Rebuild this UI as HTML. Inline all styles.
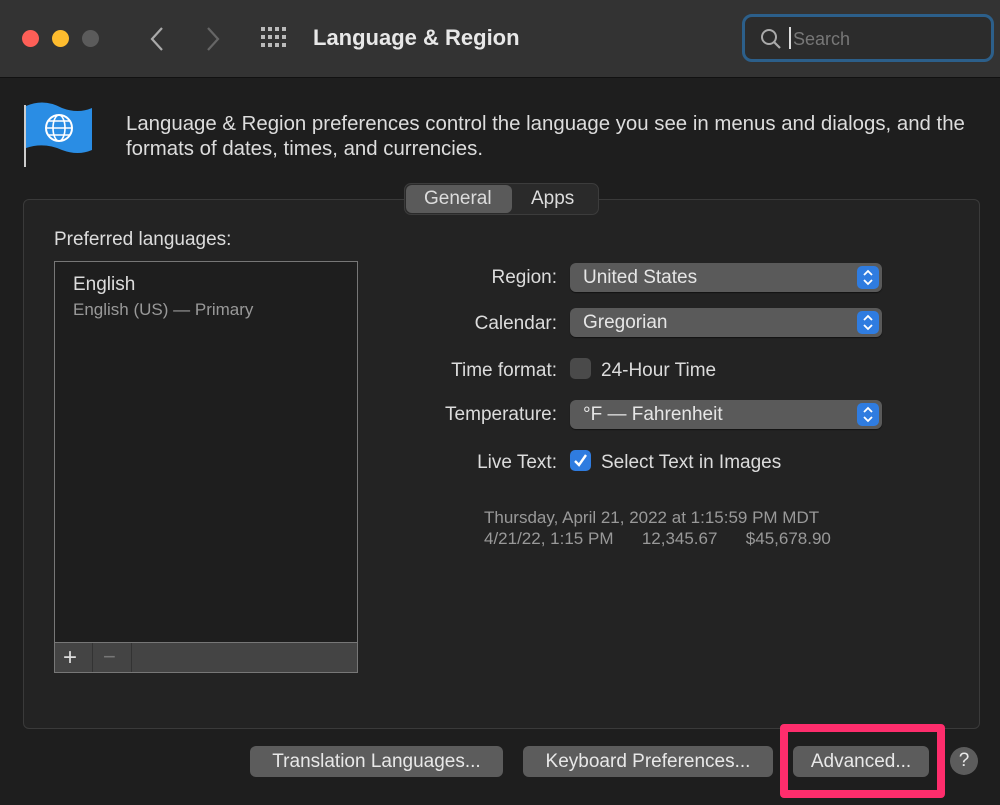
<!DOCTYPE html>
<html><head><meta charset="utf-8"><style>
*{box-sizing:border-box;margin:0;padding:0}
body{width:1000px;height:805px;background:#1e1e1e;font-family:"Liberation Sans",sans-serif;color:#dcdcdc;position:relative;overflow:hidden}
.a{position:absolute}
.tb{left:0;top:0;width:1000px;height:78px;background:#333;border-bottom:1px solid #111}
.dot{width:17px;height:17px;border-radius:50%;top:30px}
.t{font-size:19px;white-space:nowrap}
.pop{height:29px;border-radius:6px;background:#5a5a5a;left:570px;width:312px;box-shadow:0 1px 1px rgba(0,0,0,.5)}
.pop span{position:absolute;left:13px;top:4px;font-size:19px;color:#e6e6e6}
.pop i{position:absolute;right:3px;top:3px;width:22px;height:23px;border-radius:5px;background:#2f7ce0}
.pop svg{position:absolute;right:3px;top:3px}
.btn{height:31px;border-radius:6px;background:#5c5c5c;top:746px;font-size:19px;color:#e8e8e8;text-align:center;line-height:31px}
</style></head><body>
<div class="a tb"></div>
<div class="a dot" style="left:22px;background:#fe5f57"></div>
<div class="a dot" style="left:52px;background:#febc2e"></div>
<div class="a dot" style="left:82px;background:#5b5b5b"></div>
<svg class="a" style="left:145px;top:26px" width="80" height="26"><path d="M17 2 L7 13 L17 24" stroke="#aaa" stroke-width="2.2" fill="none"/><path d="M63 2 L73 13 L63 24" stroke="#666" stroke-width="2.2" fill="none"/></svg>
<svg class="a" style="left:261px;top:27px" width="30" height="22"><g fill="#bbb">
<rect x="0" y="0" width="4" height="4"/><rect x="7" y="0" width="4" height="4"/><rect x="14" y="0" width="4" height="4"/><rect x="21" y="0" width="4" height="4"/>
<rect x="0" y="8" width="4" height="4"/><rect x="7" y="8" width="4" height="4"/><rect x="14" y="8" width="4" height="4"/><rect x="21" y="8" width="4" height="4"/>
<rect x="0" y="16" width="4" height="4"/><rect x="7" y="16" width="4" height="4"/><rect x="14" y="16" width="4" height="4"/><rect x="21" y="16" width="4" height="4"/></g></svg>
<div class="a t" style="left:313px;top:25px;font-size:22px;font-weight:bold;color:#e8e8e8">Language &amp; Region</div>
<div class="a" style="left:742px;top:14px;width:252px;height:48px;border:3px solid #2c5f8a;border-radius:10px;background:#2c2c2c"></div>
<svg class="a" style="left:760px;top:28px" width="22" height="22"><circle cx="9" cy="9" r="7" stroke="#aaa" stroke-width="2" fill="none"/><path d="M14 14 L20 20" stroke="#aaa" stroke-width="2.2"/></svg>
<div class="a" style="left:789px;top:27px;width:2px;height:22px;background:#ddd"></div>
<div class="a t" style="left:793px;top:29px;color:#777;font-size:18px">Search</div>
<svg class="a" style="left:22px;top:100px" width="74" height="68">
<rect x="2" y="5" width="2" height="62" fill="#ccc"/>
<path d="M4 6 Q22 -2 40 8 Q56 14 70 8 L70 50 Q56 56 40 50 Q22 42 4 48Z" fill="#2a8de4"/>
<circle cx="37" cy="28" r="13" stroke="#fff" stroke-width="2" fill="none"/>
<ellipse cx="37" cy="28" rx="6" ry="13" stroke="#fff" stroke-width="1.6" fill="none"/>
<path d="M24 28H50M26 21H48M26 35H48" stroke="#fff" stroke-width="1.6"/></svg>
<div class="a t" style="left:126px;top:112px;line-height:25px;color:#ddd;font-size:20.4px">Language &amp; Region preferences control the language you see in menus and dialogs, and the<br>formats of dates, times, and currencies.</div>
<div class="a" style="left:23px;top:199px;width:957px;height:530px;border:1px solid #3a3a3a;border-radius:6px;background:#232323"></div>
<div class="a" style="left:404px;top:183px;width:195px;height:32px;border-radius:7px;background:#2a2a2a;border:1px solid #3c3c3c"></div>
<div class="a" style="left:406px;top:185px;width:106px;height:28px;border-radius:6px;background:#5a5a5a"></div>
<div class="a t" style="left:424px;top:188px">General</div>
<div class="a t" style="left:531px;top:188px">Apps</div>
<div class="a t" style="left:54px;top:229px">Preferred languages:</div>
<div class="a" style="left:54px;top:261px;width:304px;height:412px;border:1px solid #777;background:#1e1e1e"></div>
<div class="a" style="left:55px;top:642px;width:302px;height:30px;background:#444;border-top:1px solid #777"></div>
<div class="a" style="left:92px;top:643px;width:1px;height:29px;background:#333"></div>
<div class="a" style="left:131px;top:643px;width:1px;height:29px;background:#333"></div>
<div class="a t" style="left:63px;top:644px;font-size:24px;color:#ddd">+</div>
<div class="a t" style="left:103px;top:644px;font-size:22px;color:#777">−</div>
<div class="a t" style="left:73px;top:274px">English</div>
<div class="a t" style="left:73px;top:300px;font-size:17px;color:#999">English (US) — Primary</div>
<div class="a t" style="right:443px;top:267px">Region:</div>
<div class="a t" style="right:443px;top:313px">Calendar:</div>
<div class="a t" style="right:443px;top:360px">Time format:</div>
<div class="a t" style="right:443px;top:404px">Temperature:</div>
<div class="a t" style="right:443px;top:452px">Live Text:</div>
<div class="a pop" style="top:263px"><span>United States</span><svg width="22" height="23"><rect width="22" height="23" rx="5" fill="#2f7ce0"/><path d="M7 9 L11 5 L15 9 M7 14 L11 18 L15 14" stroke="#fff" stroke-width="1.8" fill="none"/></svg></div>
<div class="a pop" style="top:308px"><span>Gregorian</span><svg width="22" height="23"><rect width="22" height="23" rx="5" fill="#2f7ce0"/><path d="M7 9 L11 5 L15 9 M7 14 L11 18 L15 14" stroke="#fff" stroke-width="1.8" fill="none"/></svg></div>
<div class="a pop" style="top:400px"><span>°F — Fahrenheit</span><svg width="22" height="23"><rect width="22" height="23" rx="5" fill="#2f7ce0"/><path d="M7 9 L11 5 L15 9 M7 14 L11 18 L15 14" stroke="#fff" stroke-width="1.8" fill="none"/></svg></div>
<div class="a" style="left:570px;top:358px;width:21px;height:21px;border-radius:5px;background:#4a4a4a"></div>
<div class="a t" style="left:601px;top:360px">24-Hour Time</div>
<div class="a" style="left:570px;top:450px;width:21px;height:21px;border-radius:5px;background:#2f7ce0"></div>
<svg class="a" style="left:570px;top:450px" width="21" height="21"><path d="M5 11 L9 15 L16 5" stroke="#fff" stroke-width="2.4" fill="none"/></svg>
<div class="a t" style="left:601px;top:452px">Select Text in Images</div>
<div class="a t" style="left:484px;top:508px;font-size:17px;color:#999">Thursday, April 21, 2022 at 1:15:59 PM MDT</div>
<div class="a t" style="left:484px;top:529px;font-size:17px;color:#999">4/21/22, 1:15 PM&nbsp;&nbsp;&nbsp;&nbsp;&nbsp;&nbsp;12,345.67&nbsp;&nbsp;&nbsp;&nbsp;&nbsp;&nbsp;$45,678.90</div>
<div class="a btn" style="left:250px;width:253px">Translation Languages...</div>
<div class="a btn" style="left:523px;width:250px">Keyboard Preferences...</div>
<div class="a btn" style="left:793px;width:136px">Advanced...</div>
<div class="a" style="left:950px;top:747px;width:28px;height:28px;border-radius:50%;background:#5c5c5c;text-align:center;line-height:28px;font-size:19px;color:#e8e8e8">?</div>
<div class="a" style="left:780px;top:724px;width:165px;height:74px;border:8px solid #fe2d6c;border-radius:4px"></div>
</body></html>
